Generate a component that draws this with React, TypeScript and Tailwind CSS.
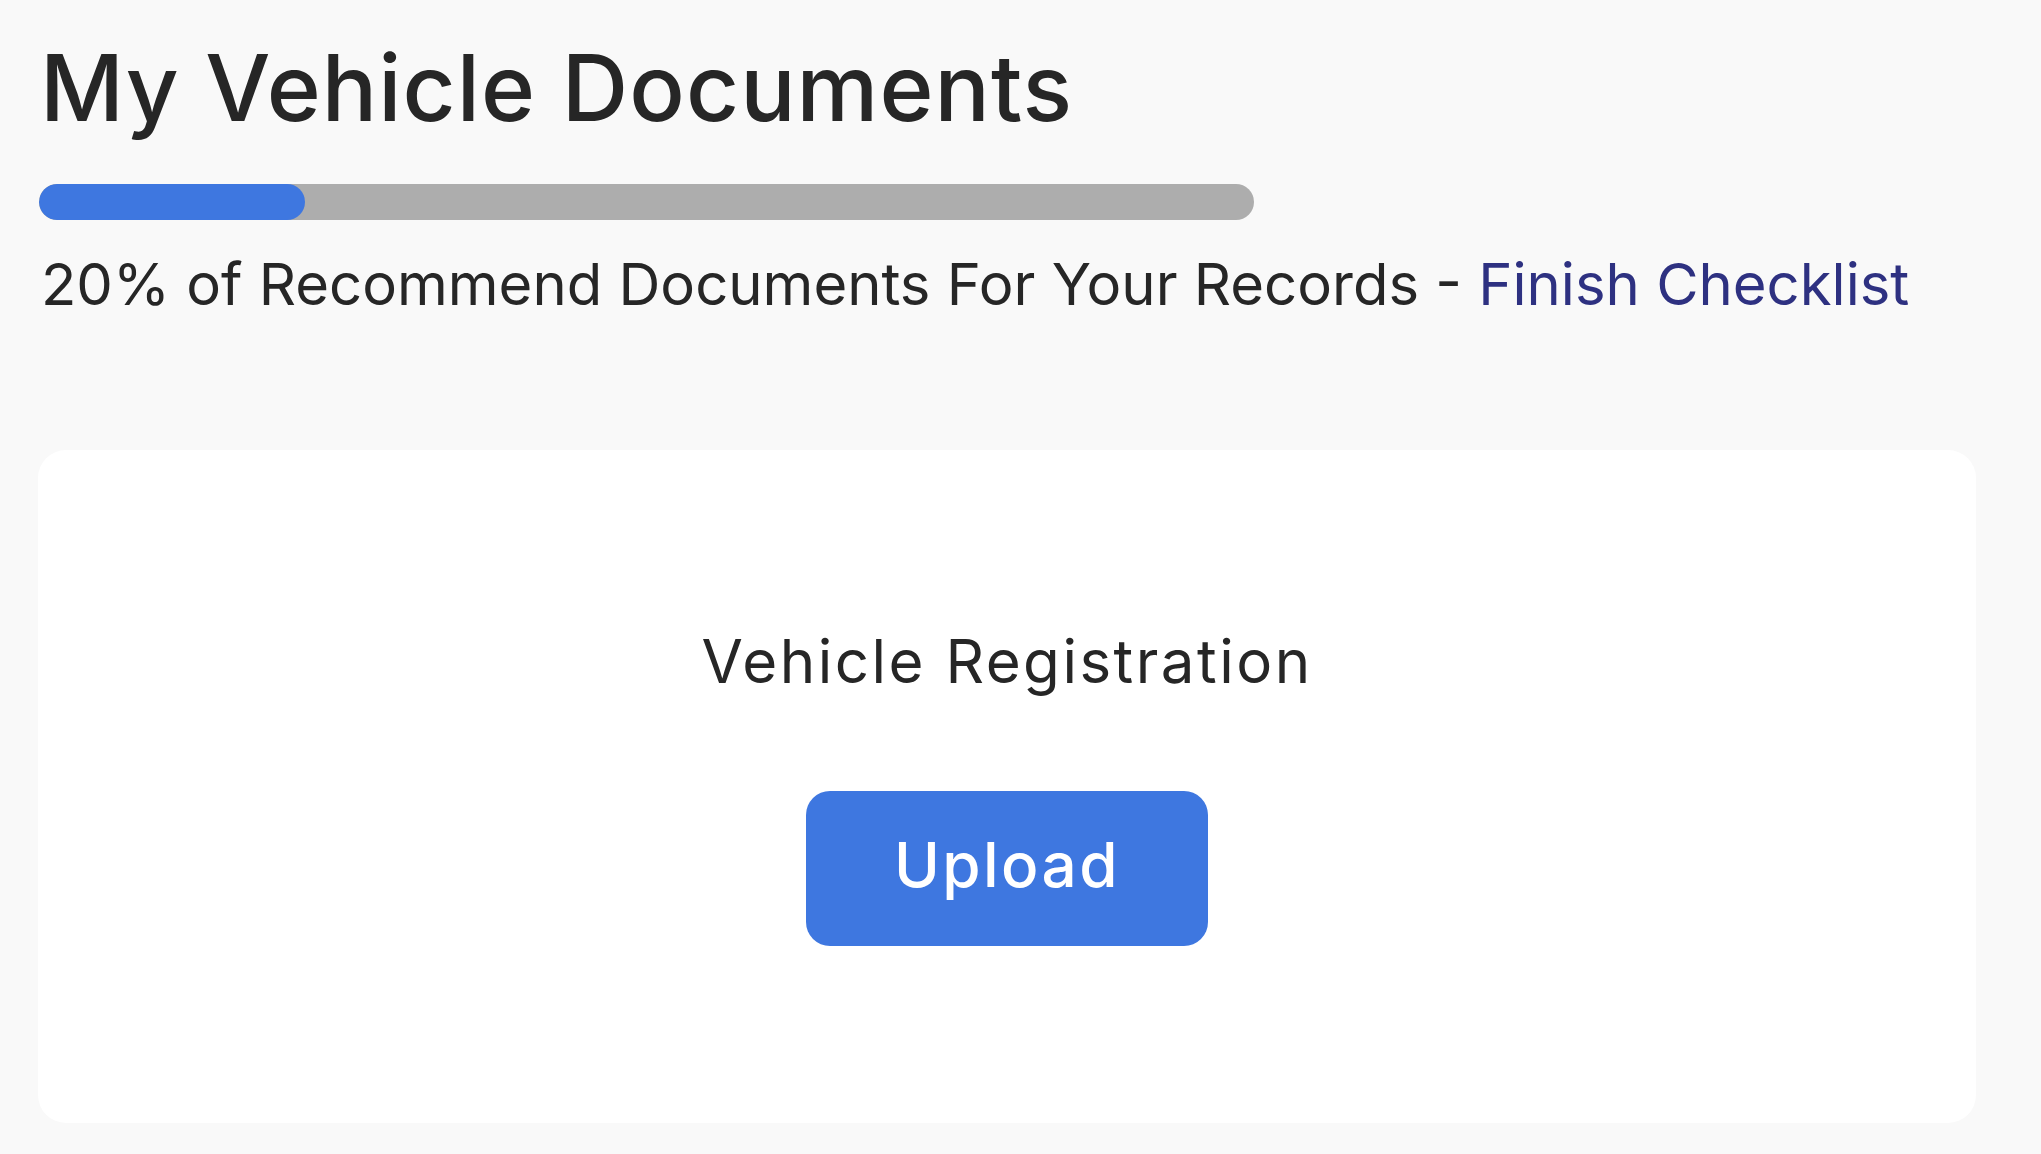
export default function App() {
  return (
    <div
      className="min-h-screen w-full bg-[#f9f9f9] text-[#262626] pl-[38px] pr-[65px] pt-[42px] pb-[31px]"
      style={{ fontFamily: "Inter, 'Noto Sans', sans-serif" }}
    >
      {/* Heading */}
      <h1 className="pl-[2px] text-[92px] leading-none font-medium tracking-[1.1px]">My Vehicle Documents</h1>

      {/* Progress */}
      <div className="mt-[50px] ml-[1px] w-[1215px] h-[36px] rounded-full bg-[#adadad] overflow-hidden">
        <div className="h-full w-[266px] rounded-full bg-[#3e77e0]" />
      </div>

      <p className="mt-[35px] pl-[3px] text-[58px] leading-none">
        20% of Recommend Documents For Your Records -{" "}
        <a href="#checklist" className="text-[#2e3181]">
          Finish Checklist
        </a>
      </p>

      {/* Document card */}
      <div className="mt-[137px] h-[673px] bg-white rounded-[28px] flex flex-col items-center pt-[181px]">
        <h2 className="text-[60px] leading-none tracking-[2.5px]">Vehicle Registration</h2>
        <button className="mt-[100px] w-[402px] h-[155px] pb-[8px] rounded-[24px] bg-[#3e77e0] text-white text-[62px] font-medium tracking-[2.4px] flex items-center justify-center">
          Upload
        </button>
      </div>
    </div>
  );
}
